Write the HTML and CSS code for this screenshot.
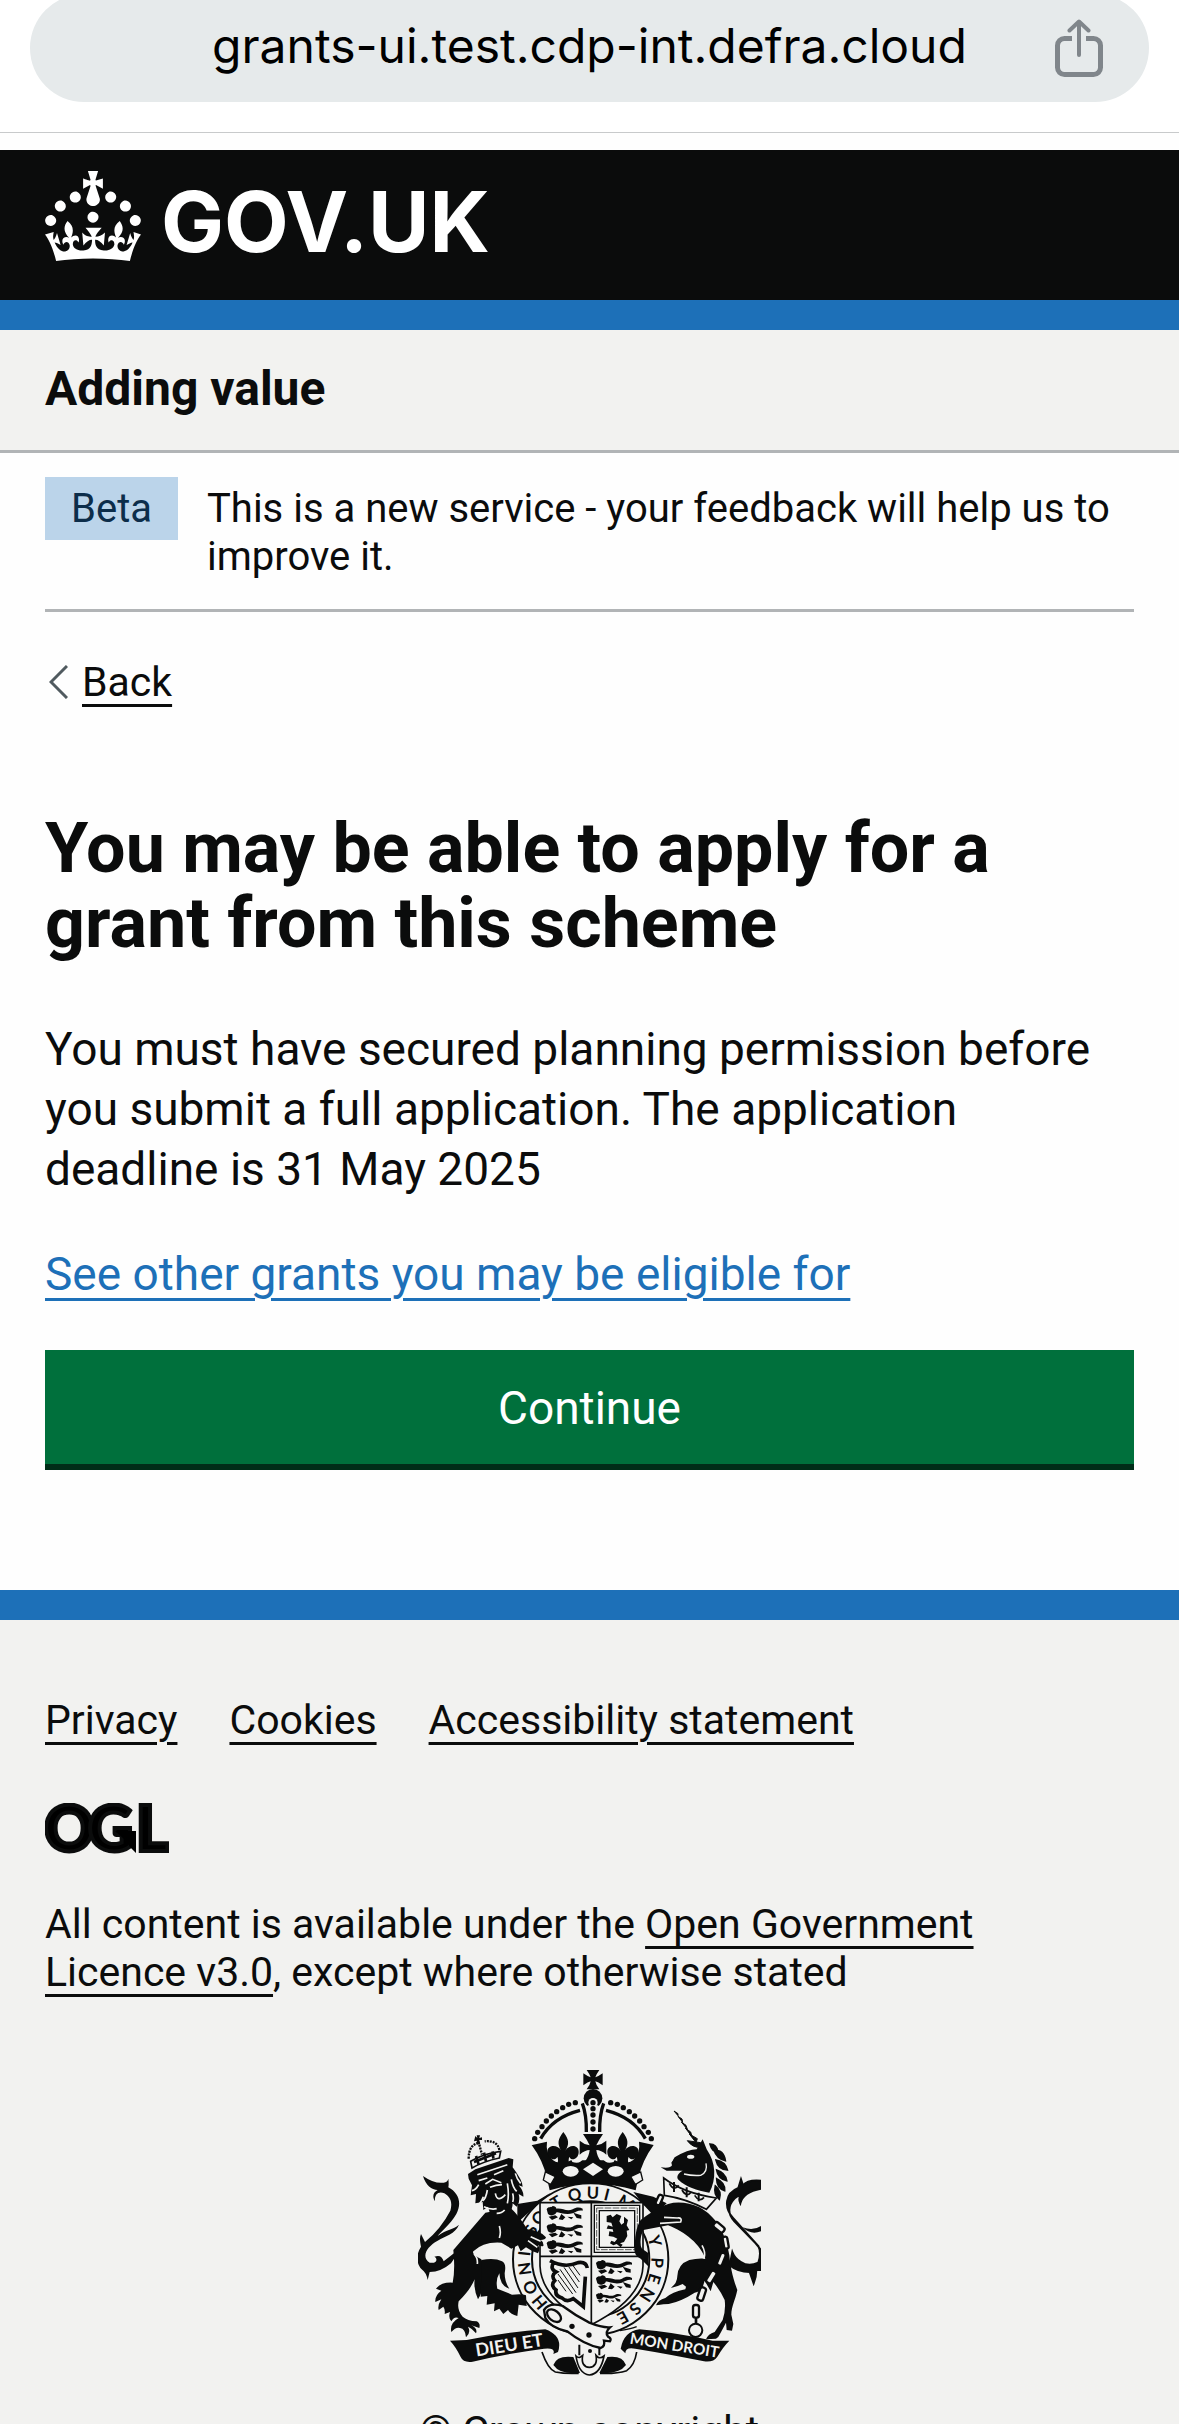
FILE: index.html
```html
<!DOCTYPE html>
<html lang="en">
<head>
<meta charset="utf-8">
<meta name="viewport" content="width=device-width, initial-scale=1">
<title>You may be able to apply for a grant from this scheme</title>
<link rel="stylesheet" href="styles.css">
</head>
<body>
<div class="page">
  <div class="browser-bar">
    <div class="address">
      <input class="address-input" type="text" aria-label="Address" value="grants-ui.test.cdp-int.defra.cloud" readonly>
      <button class="share" type="button" aria-label="Share">
        <svg width="48" height="58" viewBox="0 0 48 58" fill="none" stroke="#80868b" stroke-width="5">
          <path d="M17 19.500H9.500a7 7 0 0 0-7 7v22a7 7 0 0 0 7 7h29a7 7 0 0 0 7-7v-22a7 7 0 0 0-7-7H31"/>
          <path d="M24 36V3M14.500 11.500L24 2.500l9.500 9" stroke-width="4" stroke-linecap="round" stroke-linejoin="round"/>
        </svg>
      </button>
    </div>
  </div>

  <header class="header">
    <a class="logo" href="#" aria-label="GOV.UK">
      <svg width="460" height="90" viewBox="0 0 460 90" fill="#fff">
        <path transform="scale(3)" d="M22.600 10.400c-1 .4-2-.1-2.400-1-.4-.9.1-2 1-2.400.9-.4 2 .1 2.400 1s-.1 2-1 2.400m-5.900 6.700c-.9.4-2-.1-2.400-1-.4-.9.1-2 1-2.400.9-.4 2 .1 2.400 1s-.1 2-1 2.400m10.800-3.700c-1 .4-2-.1-2.400-1-.4-.9.1-2 1-2.400.9-.4 2 .1 2.400 1s0 2-1 2.400m3.300 4.800c-1 .4-2-.1-2.400-1-.4-.9.1-2 1-2.400.9-.4 2 .1 2.400 1s-.1 2-1 2.400M17 4.700l2.300 1.200V2.500l-2.300.7-.2-.2.9-3h-3.400l.9 3-.2.2c-.1.1-2.300-.7-2.300-.7v3.400L15 4.700c.1.1.1.2.2.2l-1.300 4c-.1.2-.1.4-.1.6 0 1.100.8 2 1.900 2.200h.7c1-.2 1.900-1.100 1.900-2.100 0-.2 0-.4-.1-.6l-1.300-4c-.1-.2 0-.2.1-.3m-7.600 5.700c.9.4 2-.1 2.400-1 .4-.9-.1-2-1-2.400-.9-.4-2 .1-2.400 1s0 2 1 2.400m-5 3c.9.4 2-.1 2.400-1 .4-.9-.1-2-1-2.400-.9-.4-2 .1-2.400 1s.1 2 1 2.400m-3.200 4.800c.9.4 2-.1 2.400-1 .4-.9-.1-2-1-2.400-.9-.4-2 .1-2.400 1s0 2 1 2.400m14.800 11c4.400 0 8.600.3 12.300.8 1.100-4.500 2.400-7 3.700-8.800l-2.500-.9c.2 1.300.3 1.900 0 2.700-.4-.4-.8-1.100-1.100-2.300l-1.200 4c.7-.5 1.300-.8 2-.9-1.100 2.500-2.600 3.100-3.500 3-1.100-.2-1.700-1.200-1.500-2.100.3-1.200 1.500-1.500 2.100-.1 1.100-2.300-.8-3-2-2.300 1.900-1.900 2.100-3.500.6-5.600-2.100 1.600-2.100 3.200-1.200 5.500-1.200-1.400-3.200-.6-2.500 1.600.9-1.400 2.100-.5 1.900.8-.2 1.100-1.700 2.100-3.500 1.900-2.700-.2-2.900-2.100-2.900-3.600.7-.1 1.900.5 2.900 1.900l.4-4.300c-1.100 1.100-2.100 1.400-3.200 1.400.4-1.200 2.100-3 2.100-3h-5.400s1.700 1.900 2.100 3c-1.100 0-2.100-.2-3.200-1.400l.4 4.300c1-1.400 2.200-2 2.900-1.900-.1 1.500-.2 3.400-2.900 3.600-1.900.2-3.400-.8-3.500-1.900-.2-1.300 1-2.200 1.900-.8.7-2.300-1.200-3-2.500-1.600.9-2.200.9-3.900-1.200-5.500-1.500 2-1.300 3.700.6 5.600-1.200-.7-3.100 0-2 2.300.6-1.400 1.800-1.100 2.100.1.2.9-.3 1.900-1.500 2.100-.9.2-2.400-.5-3.500-3 .6 0 1.200.3 2 .9l-1.200-4c-.3 1.100-.7 1.900-1.100 2.300-.3-.8-.2-1.400 0-2.700l-2.900.9C1.300 23 2.600 25.500 3.700 30c3.700-.5 7.900-.8 12.300-.8"/>
        <text class="wordmark" x="116" y="81">GOV.UK</text>
      </svg>
    </a>
  </header>

  <div class="service"><a class="service-name" href="#">Adding value</a></div>

  <div class="container">
    <div class="phase">
      <strong class="tag">Beta</strong>
      <span class="phase-text">This is a new service - your feedback will help us to improve it.</span>
    </div>
    <a class="back" href="#">
      <svg width="19" height="34" viewBox="0 0 19 34" fill="none" stroke="#505a5f" stroke-width="3"><path d="M18 1L2 17l16 16"/></svg>
      <span class="back-text">Back</span>
    </a>
    <main class="main">
      <h1 class="title">You may be able to apply for a grant from this scheme</h1>
      <p class="body">You must have secured planning permission before you submit a full application. The application deadline is 31 May 2025</p>
      <p class="body"><a class="link" href="#">See other grants you may be eligible for</a></p>
      <button class="button" type="button">Continue</button>
    </main>
  </div>

  <footer class="footer">
    <nav class="footer-links" aria-label="Support links">
      <a href="#">Privacy</a>
      <a href="#">Cookies</a>
      <a href="#">Accessibility statement</a>
    </nav>
    <svg class="ogl" width="124" height="51" viewBox="0 0 124 51" role="img" aria-label="Open Government Licence">
      <text class="ogl-mark" x="-1 43 91" y="48">OGL</text>
      <path d="M70 28h21v22l-6-6-6-8z"/>
    </svg>
    <p class="licence">All content is available under the <a href="#">Open Government Licence v3.0</a>, except where otherwise stated</p>
    <a class="copyright" href="#">
      <svg class="arms" width="343" height="306" viewBox="54 60 1029 918" fill="#0b0c0c" aria-hidden="true">
        <defs>
          <g id="arch-beads">
            <circle cx="526" cy="158" r="8"/><circle cx="506" cy="163" r="8"/><circle cx="488" cy="173" r="8"/><circle cx="470" cy="185" r="8"/><circle cx="454" cy="198" r="8"/><circle cx="439" cy="213" r="8"/><circle cx="426" cy="230" r="8"/><circle cx="413" cy="247" r="8"/><circle cx="404" cy="266" r="8"/>
            <path d="M422 266Q458 202 540 181" fill="none" stroke="#0b0c0c" stroke-width="10"/>
            <path d="M547 160Q560 195 559 246" fill="none" stroke="#0b0c0c" stroke-width="10"/>
          </g>
          <g id="passant">
            <path d="M0 8C4-2 14 4 18-2c12 0 16 14 10 22-8 8-18 8-24 2zM30 6c18-2 30 10 48 2 12-8 22-6 30-2v6c-14-2-20 4-30 8-20 6-36-2-50-4z"/>
            <path d="M6 30l20-4 8 6-18 8zM44 22l12 10-8 8-12-2M80 18l24 8v10l-14-2zM62 30l18 2-6 6z"/>
          </g>
          <g id="fleur">
            <path d="M490 246c18 22 18 38 6 56 12-20 42-18 40 6-2 20-22 26-28 12-6 16 2 26 12 30h-60c10-4 18-14 12-30-6 14-28 8-30-12-2-24 30-26 42-6-12-18-12-34 6-56z"/>
          </g>
        </defs>

        <g class="crown">
          <path d="M560 60h38q-10 14-12 22 8-2 22-12v36q-14-10-22-12 2 12 12 24h-38q10-12 12-24-8 2-22 12V70q14 10 22 12-2-8-12-22z"/>
          <circle cx="579" cy="145" r="28"/>
          <circle cx="579" cy="158" r="14" class="paper"/>
          <path d="M564 166h30l-4 82h-22z" class="paper"/>
          <circle cx="579" cy="158" r="8"/><circle cx="579" cy="176" r="8"/><circle cx="579" cy="195" r="8"/><circle cx="579" cy="216" r="8"/><circle cx="579" cy="237" r="8"/>
          <use href="#arch-beads"/>
          <use href="#arch-beads" transform="translate(1158 0) scale(-1 1)"/>
          <path d="M397 285l44-10q-4 30 12 50c14 16 36 18 60 6h132c24 12 46 10 60-6q16-20 12-50l44 10q-34 46-46 100l-8 36q-130-38-258 0l-8-36q-12-54-46-100z"/>
          <path d="M455 282q-6 46 20 54 32 6 36-14l6 14q24 8 34-12l-4-40h-40l-26-6zM703 282q6 46-20 54-32 6-36-14l-6 14q-24 8-34-12l4-40h40l26-6z" class="paper"/>
          <use href="#fleur"/>
          <use href="#fleur" transform="translate(1158 0) scale(-1 1)"/>
          <path d="M549 252h60q-14 20-20 34 16-2 30-14v42q-16-14-30-14 2 20 14 34h-48q12-14 14-34-14 0-30 14v-42q14 12 30 14-6-14-20-34z"/>
          <path d="M549 358l30-20 30 20-30 20z" class="paper"/>
          <ellipse cx="512" cy="364" rx="24" ry="16" class="paper"/><ellipse cx="647" cy="364" rx="24" ry="16" class="paper"/>
          <path d="M436 366l30 14-14 24-22-14zM722 366l-30 14 14 24 22-14z" class="paper edge"/>
        </g>

        <path d="M352 462l60-10 40-24-100 90zM700 426l60 14 40 20-40 40z"/>
        <ellipse cx="572" cy="628" rx="233" ry="228" class="paper" stroke="#0b0c0c" stroke-width="6"/>
        <g class="motto" text-anchor="middle">
          <text x="572" y="446" transform="rotate(-130 572 628)">H</text>
          <text x="572" y="446" transform="rotate(-115 572 628)">O</text>
          <text x="572" y="446" transform="rotate(-98 572 628)">N</text>
          <text x="572" y="446" transform="rotate(-85 572 628)">I</text>
          <text x="572" y="446" transform="rotate(-64 572 628)">S</text>
          <text x="572" y="446" transform="rotate(-51 572 628)">O</text>
          <text x="572" y="446" transform="rotate(-31 572 628)">T</text>
          <text x="572" y="446" transform="rotate(-14 572 628)">Q</text>
          <text x="572" y="446" transform="rotate(2 572 628)">U</text>
          <text x="572" y="446" transform="rotate(14 572 628)">I</text>
          <text x="572" y="446" transform="rotate(32 572 628)">M</text>
          <text x="572" y="446" transform="rotate(74 572 628)">Y</text>
          <text x="572" y="446" transform="rotate(93 572 628)">P</text>
          <text x="572" y="446" transform="rotate(107 572 628)">E</text>
          <text x="572" y="446" transform="rotate(122 572 628)">N</text>
          <text x="572" y="446" transform="rotate(138 572 628)">S</text>
          <text x="572" y="446" transform="rotate(151 572 628)">E</text>
        </g>
        <ellipse cx="572" cy="628" rx="176" ry="174" fill="none" stroke="#0b0c0c" stroke-width="6"/>

        <g class="shield">
          <path d="M420 458h309v190q-4 100-155 176-150-76-154-176z" class="paper" stroke="#0b0c0c" stroke-width="5"/>
          <path d="M574 458v366M420 619h309" stroke="#0b0c0c" stroke-width="5"/>
          <use href="#passant" x="440" y="470"/><use href="#passant" x="440" y="522"/><use href="#passant" x="440" y="572"/>
          <path d="M583 466h136v141H583zM598 482h106v110H598z" fill="none" stroke="#0b0c0c" stroke-width="4"/>
          <path d="M590 474h122v125H590z" fill="none" stroke="#0b0c0c" stroke-width="2" stroke-dasharray="20 4"/>
          <path d="M620 498l12-4 6 8 12-10 14 6-6 16 6 10 8-6 0-18 12 10-4 16 8 14-8 2 2 16-10 18-12 4 8 4-6 8-12-10-10 4-10-6 4-8 10 4 8-10-12-6-14-2 2-14 12 2-2-8-18-2 4-10 14 4-4-12-14-2z"/>
          <use href="#passant" x="588" y="632"/><use href="#passant" x="588" y="678"/>
          <g transform="translate(588 730) scale(.7)"><use href="#passant"/></g>
          <path d="M450 632q44 24 84 6 24-4 28 16M462 636q-14 20 6 30-16 10-4 26-14 14 4 28-4 18 18 24 14 14 34 2l30 24 6-90" fill="none" stroke="#0b0c0c" stroke-width="11"/>
          <path d="M474 690l24 34M474 672l44 60M480 658l48 70M492 652l42 62M506 650l32 46M520 648l20 28" stroke="#0b0c0c" stroke-width="3"/>
        </g>

        <g class="belt">
          <path d="M432 780q16-24 56-12 40 30 80 50 40 16 62 14-16 14-6 28 12 6 6 14l-18-2q4 16-10 22-50-10-100-50-50-10-66-40z" class="paper" stroke="#0b0c0c" stroke-width="7"/>
          <ellipse cx="462" cy="797" rx="24" ry="15" transform="rotate(38 462 797)" fill="none" stroke="#0b0c0c" stroke-width="7"/>
          <circle cx="516" cy="829" r="8"/><circle cx="567" cy="855" r="8"/>
          <path d="M538 884v32M598 892v24" stroke="#0b0c0c" stroke-width="6"/><circle cx="570" cy="903" r="6"/>
          <path d="M426 906q18 52 40 60 30 6 70 4M710 906q-6 40-30 56-30 10-80 8" fill="none" stroke="#0b0c0c" stroke-width="5"/>
          <path d="M460 945q10-30 60-24l20 48q-60 6-80-24zM678 945q-10-30-56-24l-24 48q60 4 80-24z"/>
          <path d="M528 918q8 54 40 57 34-3 44-57-10 8-18 4l-6-6q6 34-20 36-26-2-20-36l-8 6q-6 2-12-4z" class="paper" stroke="#0b0c0c" stroke-width="5"/>
          <path d="M660 842q36-6 50-12" fill="none" stroke="#0b0c0c" stroke-width="4"/>
        </g>

        <g class="lion">
          <path d="M69 378q34 24 62 20 12-2 14-12 2 18 0 26c30 16 42 46 24 80-20 34-44 50-56 66 28-22 46-18 64-34-12 28-40 34-64 48-34 18-50 50-24 66 24 4 24-14 14-18 16-6 24 0 28 14l56-44-34 50q-30 26-64 26l-6 24q-4-22-18-32c-18-20-16-46-2-68-4-20-4-28 0-38l12 24q48-40 76-94c8-28-2-42-18-52-20-8-30 6-28 24-10-16-4-28 8-34-18 0-36-14-44-42z"/>
          <path d="M256 488l-96 112q6 60-2 98-34-2-50 18l16 6q-20 14-18 34l18-8q-12 18-8 32l14-10q6 8 4 22l16-6q-6 18 4 28 8-16 22-10-28 16-22 42 14-16 26-12 16 2 18 28 16-14 6-32 10 4 24 20 6-14-14-24l24 8q4-14-8-20-28-2-42-14-18-20-12-46 36-36 48-66-4 28 10 60 14-20 14-50 10-40-4-70-30-16-24-24 30-30 84-26l30 18 20-10 8 18 16-12q16 12 36 18 8-14 0-24 12 4 16 2 2-12-8-18 14 0 16-8-16-20-56-24-26-42-50-64z"/>
          <path d="M244 630q40-8 62 4 14 6 8 36 0 26 14 46-28-8-30-46-12 20-6 46l44 18q30-4 42 2l2 32-24-4-4 34q-20-4-28-18l-14 12-12-16-16 8 2-24-24 4 2-26-20 2q2-70 2-110z"/>
          <path d="M204 372l22-14 100-34 14 4-2 24q30 40 30 58l-12-4q16 18 14 34l-14-8q6 24-6 38l-12-10q0 20-12 28l-8-10-14 36-18-26-16 2-6-20-14 10-2-24-22 4 2-28-16 4 4-30-10-20z"/>
          <path d="M232 374l90-30M236 392l26-8M282 374l28-12M256 402l22-14 26 10M270 412q18-8 36-8M286 430q6 30 30 4M262 420q-4 26-14 32M334 388q4 24 16 36M322 400q6 34 0 60M236 404q-8 16-20 18M346 370q4 16 16 30M250 440q-4 12-12 22M338 430q4 16 0 26M252 470q20 10 38 6M290 490q16 0 24-10M222 612q12 12 10 30M298 528q6 20 0 36M392 560l30 14M384 572l28 20" fill="none" stroke="#f2f2f0" stroke-width="5"/>
          <path d="M212 334q40-24 90-30l-4 20q-48 10-82 30z" class="paper" stroke="#0b0c0c" stroke-width="5"/>
          <path d="M228 318l8 26M252 308l6 26M278 304l2 22M222 336l66-26" stroke="#0b0c0c" stroke-width="8"/>
          <path d="M206 326q0-44 34-48M298 300q-6-30-44-26M238 284l8 30" fill="none" stroke="#0b0c0c" stroke-width="7" stroke-dasharray="6 3"/>
          <path d="M226 258l6 6-2-8 10 0-2 8 8-2 0 8-8 0 2 12-8 2-2-12-8 2z"/>
        </g>

        <g class="unicorn">
          <path d="M822 183l12 8 0 6zM834 199l12 8 2 10zM844 216l14 10 4 12zM856 234l16 12 4 14zM868 252l24 14-4 12zM862 272l40 6 0 14q-24 2-40-20z" stroke="#0b0c0c" stroke-width="3"/>
          <path d="M890 298l18-30 12 30c28 40 30 90 8 130-38-6-70-18-92-38-8-8-4-20 12-28l-48 0-18-10q30 4 34-6l-2-8 10-16q40-24 66-24z"/>
          <path d="M918 340q6 26-16 36-26 2-50-4" fill="none" stroke="#f2f2f0" stroke-width="4"/>
          <ellipse cx="872" cy="320" rx="11" ry="6" class="paper"/><circle cx="812" cy="331" r="5" class="paper"/>
          <path d="M930 282q20 0 24 24-18 0-24-24zM942 300q30 0 34 32-26-6-34-32zM948 330q28 4 34 30-28-2-34-30zM950 360q26 8 30 32-26-6-30-32zM950 386q26 12 24 36-24-8-24-36zM946 408q20 16 12 40-18-14-12-40z" stroke="#0b0c0c" stroke-width="5"/>
          <path d="M791 384q60 46 158 60l-30 34q-60-32-126-42z" class="paper" stroke="#0b0c0c" stroke-width="5"/>
          <path d="M808 400q14 26 28 6M846 420q14 24 28 6M884 436q14 22 28 6" fill="none" stroke="#0b0c0c" stroke-width="5"/>
          <path d="M822 396v30M860 412v30M896 428v26" stroke="#0b0c0c" stroke-width="6"/>
          <path d="M778 474c30-22 80-22 120-2 50 26 80 80 90 144 4 36 8 60 24 104-6 30-18 50-18 74l6 28-4 20-16-2-2-22-16 30q-6 14-14 18l-30 2q6-16 26-22l24-36q10-30 6-60-14-30-34-54l-8 28-18-32-6 20q-8 14-24 16-40 26-78 34-12 0-38 4 6-16 28-22 20-18 60-26l2-8-10-8q-16 8-36 12 20-14 20-36 2-36 36-48 24-6 48-4c-14-42-60-80-112-100l-74 14q-16 36-4 56l20 14q0 16-2 38l-22-22q-24-10-18-40 2-54 18-76 30-24 58-36z"/>
          <path d="M780 520l62-4q6-14-10-12l-40-2M912 626q6-20-6-40" fill="none" stroke="#f2f2f0" stroke-width="5"/>
          <path d="M1083 392q-40-4-54 14l-6-18-8 26c-40 16-44 58-16 90l76 84q10 20 0 50-30 14-52-2-18-10-26-30l-8 40q24 20 60 20l12 34q8-20 8-40h14v-60l-16-20-64-66q-22-24-12-50 12-24 30-28-6 12 0 24 8-34 62-44z" stroke="#0b0c0c" stroke-width="6"/>
          <path d="M1028 532q24 24 55 12v-16q-24 16-55 4z"/>
          <g fill="#f2f2f0" stroke="#0b0c0c" stroke-width="7">
            <rect x="-9" y="-18" width="18" height="36" rx="7" transform="translate(957 532) rotate(-50)"/>
            <rect x="-7" y="-18" width="14" height="36" rx="6" transform="translate(977 578) rotate(-10)"/>
            <rect x="-8" y="-20" width="16" height="40" rx="7" transform="translate(964 628) rotate(22)"/>
            <rect x="-9" y="-20" width="18" height="40" rx="7" transform="translate(934 681) rotate(32)"/>
            <rect x="-9" y="-20" width="18" height="40" rx="7" transform="translate(905 732) rotate(18)"/>
            <rect x="-9" y="-19" width="18" height="38" rx="7" transform="translate(888 784)"/>
            <rect x="-7" y="-16" width="14" height="32" rx="6" transform="translate(778 450) rotate(24)"/>
          </g>
          <path d="M888 804v16" stroke="#0b0c0c" stroke-width="8"/>
          <circle cx="887" cy="841" r="20" fill="none" stroke="#0b0c0c" stroke-width="6"/>
        </g>

        <path d="M150 872l50-2q130-26 236-32 54 20 38 68l-14 6q8-20-28-16-120 16-214 39-28 4-36-14-14-30-32-49z"/>
        <path d="M988 872l-50 0q-120-26-220-34-46 6-56 58l14 14q0-20 30-14 110 18 206 38 28 4 40-14 18-30 36-48z"/>
        <g class="ribbon" text-anchor="middle">
          <text class="ribbon-left" x="328" y="904" transform="rotate(-9 328 888)">DIEU ET</text>
          <text class="ribbon-right" x="823" y="902" transform="rotate(9 823 888)">MON DROIT</text>
        </g>
      </svg>
      <span>© Crown copyright</span>
    </a>
  </footer>
</div>
</body>
</html>
```
FILE: styles.css
```css
* { box-sizing: border-box; }

body {
  margin: 0;
  background: #fefefe;
  color: #0b0c0c;
  font-family: Roboto, "Liberation Sans", sans-serif;
}

a { color: inherit; }

.page {
  height: 100vh;
  overflow: hidden;
}

/* Browser address bar */
.browser-bar {
  height: 133px;
  overflow: hidden;
  padding: 0 30px;
  border-bottom: 1px solid #c8cacb;
  background: #fff;
}

.address {
  display: flex;
  align-items: center;
  height: 108px;
  margin-top: -6px;
  padding: 0 46px;
  border-radius: 54px;
  background: #e6eaeb;
}

.address-input {
  flex: 1;
  min-width: 0;
  height: 108px;
  padding: 0 0 6px 48px;
  border: 0;
  outline: 0;
  background: none;
  color: #000;
  font: 400 48px Inter, "Liberation Sans", sans-serif;
  text-align: center;
}

.share {
  flex: none;
  height: 58px;
  padding: 0;
  border: 0;
  background: none;
}

.share svg,
.logo svg,
.ogl,
.arms { display: block; }

/* Header */
.header {
  margin-top: 17px;
  padding: 21px 45px 39px;
  border-bottom: 30px solid #1d70b8;
  background: #0b0c0c;
}

.logo {
  display: inline-block;
  vertical-align: top;
}

.wordmark { font: 700 84px Inter, "Liberation Sans", sans-serif; }

.service {
  padding: 29px 45px 31px;
  border-bottom: 3px solid #b1b4b6;
  background: #f2f2f0;
  font-size: 48px;
  line-height: 60px;
}

.service-name {
  font-weight: 700;
  text-decoration: none;
}

.container { padding: 0 45px; }

.phase {
  display: flex;
  align-items: flex-start;
  gap: 29px;
  padding: 24px 0 28px;
  border-bottom: 3px solid #b1b4b6;
  font-size: 40px;
  line-height: 48px;
}

.tag {
  padding: 8px 26px 7px;
  background: #bbd4ea;
  color: #0c2d4a;
  font-weight: 400;
}

.phase-text { padding-top: 8px; }

.back {
  display: inline-flex;
  align-items: center;
  gap: 14px;
  margin-top: 46px;
  padding-left: 4px;
  font-size: 41px;
  line-height: 48px;
  text-decoration: none;
  vertical-align: top;
}

.back-text,
.link,
.footer-links a,
.licence a {
  text-decoration: underline;
  text-decoration-thickness: 3px;
  text-underline-offset: 8px;
}

.main { padding: 105px 0 120px; }

.title {
  margin: 0 0 58px;
  font-size: 70px;
  font-weight: 700;
  line-height: 75px;
}

.body {
  margin: 0 0 45px;
  font-size: 46px;
  line-height: 60px;
}

.link { color: #1d70b8; }

.button {
  display: block;
  width: 100%;
  margin-top: 46px;
  padding: 28px 30px 26px;
  border: 0;
  background: #00703c;
  box-shadow: 0 6px 0 #002d18;
  color: #fff;
  font: 400 46px/60px Roboto, "Liberation Sans", sans-serif;
  text-align: center;
}

/* Footer */
.footer {
  padding: 76px 45px;
  margin-top: 6px;
  border-top: 30px solid #1d70b8;
  background: #f2f2f0;
  font-size: 41px;
  line-height: 48px;
}

.footer-links {
  display: flex;
  flex-wrap: wrap;
  gap: 52px;
}

.ogl { margin-top: 59px; }

.ogl-mark {
  font: 900 62px Lato, "Liberation Sans", sans-serif;
  stroke: #0b0c0c;
  stroke-width: 4px;
}

.licence {
  max-width: 1000px;
  margin: 46px 0 74px;
}

.copyright {
  display: flex;
  flex-direction: column;
  align-items: center;
  gap: 31px;
  text-decoration: none;
}

.paper { fill: #f2f2f0; }

.edge {
  stroke: #0b0c0c;
  stroke-width: 4px;
}

.motto { font: 700 50px Lato, "Liberation Sans", sans-serif; }

.ribbon { fill: #f2f2f0; }

.ribbon-left { font: 700 54px Lato, "Liberation Sans", sans-serif; }

.ribbon-right { font: 700 46px Lato, "Liberation Sans", sans-serif; }
```
